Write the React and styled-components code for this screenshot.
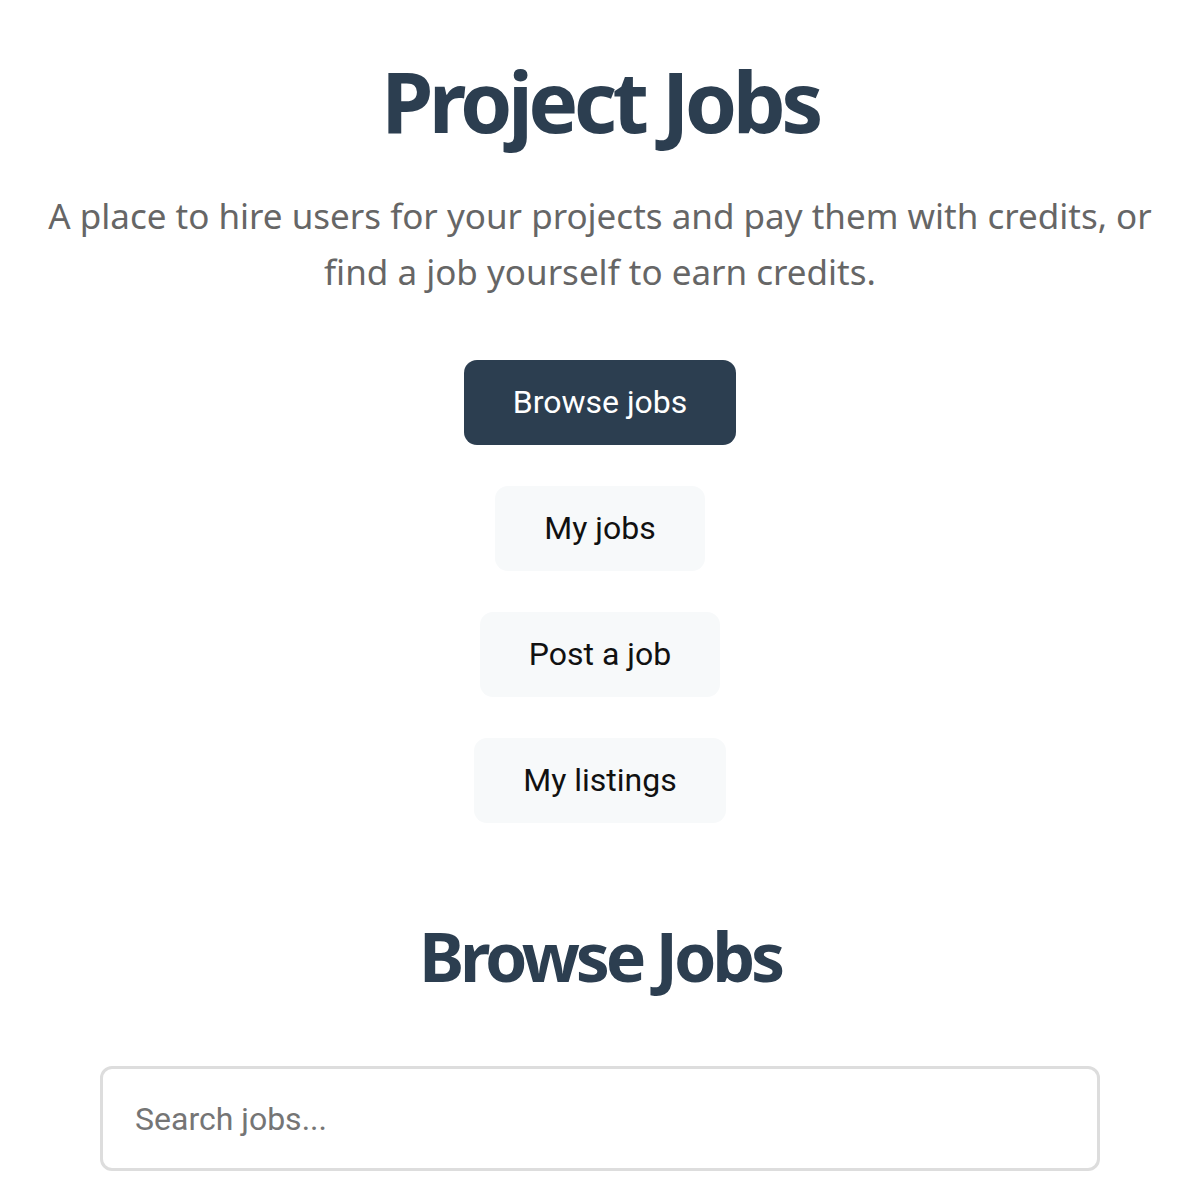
import React from "react";
import styled, { createGlobalStyle } from "styled-components";

const Global = createGlobalStyle`
  html, body { margin: 0; padding: 0; background: #fff; }
  * { box-sizing: border-box; }
`;

const Page = styled.main`
  display: flex;
  flex-direction: column;
  align-items: center;
  padding: 51px 40px 0;
  font-family: "Noto Sans", "Open Sans", sans-serif;
`;

const Title = styled.h1`
  margin: 0;
  font-family: "Noto Sans", "Open Sans", sans-serif;
  font-weight: 700;
  font-size: ${(p) => p.$size}px;
  letter-spacing: ${(p) => p.$ls}em;
  line-height: 1.2;
  color: #2c3e50;
  text-align: center;
`;

const Subtitle = styled.p`
  margin: 36px 0 0;
  font-family: "Noto Sans", "Open Sans", sans-serif;
  font-size: 35px;
  line-height: 56px;
  color: #666;
  text-align: center;
  max-width: 1120px;
`;

const Nav = styled.nav`
  display: flex;
  flex-direction: column;
  align-items: center;
  gap: 41px;
  margin-top: 60px;
`;

const NavButton = styled.button`
  height: 85px;
  padding: 0 49px;
  border: none;
  border-radius: 13px;
  font-family: Roboto, sans-serif;
  font-size: 32px;
  background: ${(p) => (p.$active ? "#2c3e50" : "#f7f9fa")};
  color: ${(p) => (p.$active ? "#fff" : "#111")};
  cursor: pointer;
`;

const Section = styled.section`
  width: 100%;
  max-width: 1000px;
  display: flex;
  flex-direction: column;
  align-items: center;
  margin-top: 92px;
`;

const SearchInput = styled.input`
  width: 100%;
  height: 105px;
  margin-top: 70px;
  padding: 0 32px;
  border: 3px solid #ddd;
  border-radius: 12px;
  font-family: Roboto, sans-serif;
  font-size: 32px;
  color: #333;
  outline: none;
  &::placeholder { color: #757575; }
`;

export default function App() {
  return (
    <>
      <Global />
      <Page>
        <Title $size={84} $ls={-0.055}>Project Jobs</Title>
        <Subtitle>
          A place to hire users for your projects and pay them with credits, or find a job yourself to earn credits.
        </Subtitle>
        <Nav>
          <NavButton $active>Browse jobs</NavButton>
          <NavButton>My jobs</NavButton>
          <NavButton>Post a job</NavButton>
          <NavButton>My listings</NavButton>
        </Nav>
        <Section>
          <Title as="h2" $size={68} $ls={-0.062}>Browse Jobs</Title>
          <SearchInput placeholder="Search jobs..." />
        </Section>
      </Page>
    </>
  );
}
